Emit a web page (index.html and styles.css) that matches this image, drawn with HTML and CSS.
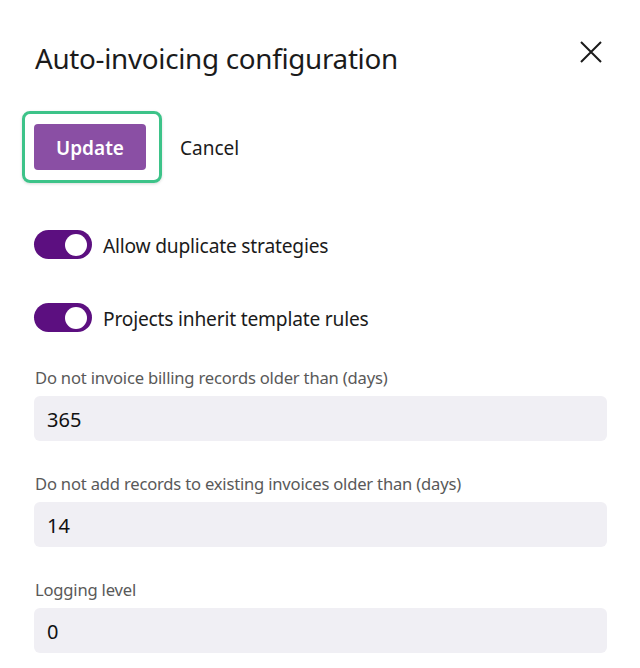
FILE: index.html
```html
<!DOCTYPE html>
<html>
<head>
<meta charset="utf-8">
<link rel="stylesheet" href="styles.css">
</head>
<body>
<div class="panel">
  <header class="head">
    <h1 class="title">Auto-invoicing configuration</h1>
    <button class="close" aria-label="Close">
      <svg width="22" height="22" viewBox="0 0 22 22"><path d="M1 1 L21 21 M21 1 L1 21" stroke="#1a1a1a" stroke-width="2" fill="none"/></svg>
    </button>
  </header>
  <div class="actions">
    <div class="focus"><button class="btn-primary">Update</button></div>
    <button class="btn-link">Cancel</button>
  </div>
  <div class="toggles">
    <label class="toggle-row"><span class="switch"><span class="knob"></span></span><span class="toggle-label">Allow duplicate strategies</span></label>
    <label class="toggle-row"><span class="switch"><span class="knob"></span></span><span class="toggle-label">Projects inherit template rules</span></label>
  </div>
  <div class="fields">
    <div class="field">
      <div class="field-label">Do not invoice billing records older than (days)</div>
      <div class="input">365</div>
    </div>
    <div class="field">
      <div class="field-label">Do not add records to existing invoices older than (days)</div>
      <div class="input">14</div>
    </div>
    <div class="field">
      <div class="field-label">Logging level</div>
      <div class="input">0</div>
    </div>
  </div>
</div>
</body>
</html>
```
FILE: styles.css
```css
* { box-sizing: border-box; }
html, body { margin: 0; padding: 0; background: #fff; }
body { font-family: "Noto Sans", "Open Sans", sans-serif; color: #1b1b1b; }
.panel { width: 640px; height: 668px; padding: 38px 33px 0 34px; overflow: hidden; }
.head { display: flex; justify-content: space-between; align-items: flex-start; }
.title { margin: 0; font-size: 27.8px; font-weight: 400; line-height: 40px; letter-spacing: -0.3px; padding-left: 1px; }
.close { border: 0; background: none; padding: 0; margin: 3px 5px 0 0; width: 22px; height: 22px; display: flex; }
.actions { display: flex; align-items: center; margin-top: 33px; margin-left: -12px; }
.focus { border: 3px solid #3dc389; border-radius: 8px; padding: 10px 13px 10px 9px; box-shadow: 0 1px 3px rgba(0,0,0,0.15); }
.btn-primary { border: 0; border-radius: 4px; background: #8a4fa4; color: #fff; font-family: inherit; font-size: 19px; font-weight: 600; width: 112px; height: 46px; padding: 2px 0 0 0; }
.btn-link { border: 0; background: none; font-family: inherit; font-size: 19px; color: #1b1b1b; margin-left: 18px; padding: 1px 0 0 0; }
.toggles { display: flex; flex-direction: column; gap: 44px; margin-top: 47px; }
.toggle-row { display: flex; align-items: center; gap: 11px; height: 29px; }
.switch { width: 58px; height: 29px; border-radius: 15px; background: #5c0f80; display: flex; align-items: center; justify-content: flex-end; padding-right: 5px; flex: none; }
.knob { width: 22px; height: 22px; border-radius: 50%; background: #fff; }
.toggle-label { font-size: 19.2px; letter-spacing: -0.2px; line-height: 28px; padding-top: 2px; }
.fields { display: flex; flex-direction: column; gap: 32px; margin-top: 35px; }
.field { display: flex; flex-direction: column; gap: 7px; }
.field-label { font-size: 16.6px; color: #595959; letter-spacing: -0.2px; line-height: 22px; padding-left: 1px; }
.input { height: 45px; border-radius: 6px; background: #f0eff4; font-size: 20px; line-height: 44px; padding: 2px 13px 0; color: #111; }
```
